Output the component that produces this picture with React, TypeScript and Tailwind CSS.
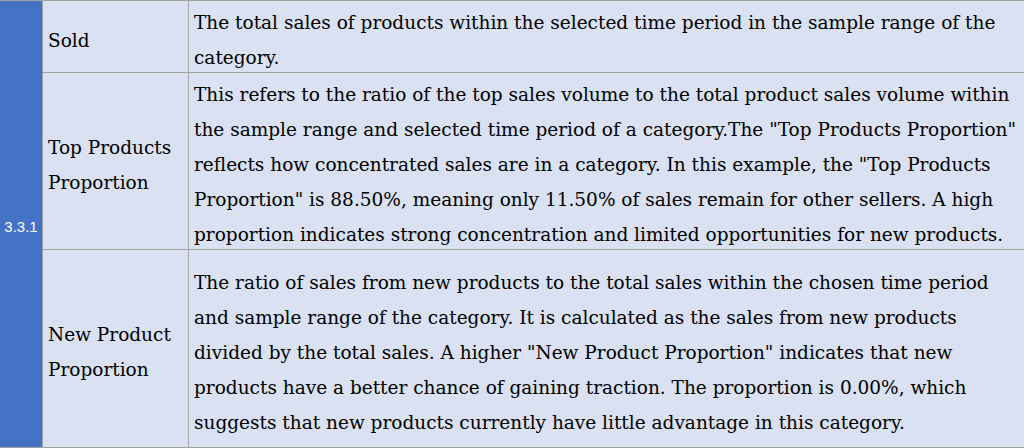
import React from 'react';

type Row = {
  label: string[];
  lines: string[];
  height: string;
};

const rows: Row[] = [
  {
    label: ['Sold'],
    height: 'h-[72px]',
    lines: [
      'The total sales of products within the selected time period in the sample range of the',
      'category.',
    ],
  },
  {
    label: ['Top Products', 'Proportion'],
    height: 'h-[177px]',
    lines: [
      'This refers to the ratio of the top sales volume to the total product sales volume within',
      'the sample range and selected time period of a category.The "Top Products Proportion"',
      'reflects how concentrated sales are in a category. In this example, the "Top Products',
      'Proportion" is 88.50%, meaning only 11.50% of sales remain for other sellers. A high',
      'proportion indicates strong concentration and limited opportunities for new products.',
    ],
  },
  {
    label: ['New Product', 'Proportion'],
    height: 'h-[198px]',
    lines: [
      'The ratio of sales from new products to the total sales within the chosen time period',
      'and sample range of the category. It is calculated as the sales from new products',
      'divided by the total sales. A higher "New Product Proportion" indicates that new',
      'products have a better chance of gaining traction. The proportion is 0.00%, which',
      'suggests that new products currently have little advantage in this category.',
    ],
  },
];

export default function App() {
  return (
    <div className="w-[1024px] h-[448px] bg-white overflow-hidden">
      <div className="flex h-[448px] border-t border-b border-[#a3a3a3] bg-[#d9e1f2] font-['DejaVu_Serif',serif] text-[18.5px] text-black">
        <div className="w-[43px] shrink-0 bg-[#4472c4] flex items-center justify-center pt-[6px] border-r border-[#a3a3a3]">
          <span className="font-['Liberation_Sans',sans-serif] text-[15px] text-white">3.3.1</span>
        </div>
        <div className="flex-1 flex flex-col">
          {rows.map((row, i) => (
            <div
              key={i}
              className={`flex ${row.height} ${i < rows.length - 1 ? 'border-b border-[#a3a3a3]' : ''}`}
            >
              <div className="w-[146px] shrink-0 border-r border-[#a3a3a3] flex flex-col justify-center pl-[5px] pt-[7px] leading-[35px]">
                {row.label.map((l) => (
                  <span key={l} className="whitespace-nowrap">{l}</span>
                ))}
              </div>
              <div className="flex-1 flex flex-col justify-center pl-[5px] pt-[7px] leading-[35px]">
                {row.lines.map((l) => (
                  <span key={l} className="whitespace-nowrap">{l}</span>
                ))}
              </div>
            </div>
          ))}
        </div>
      </div>
    </div>
  );
}
